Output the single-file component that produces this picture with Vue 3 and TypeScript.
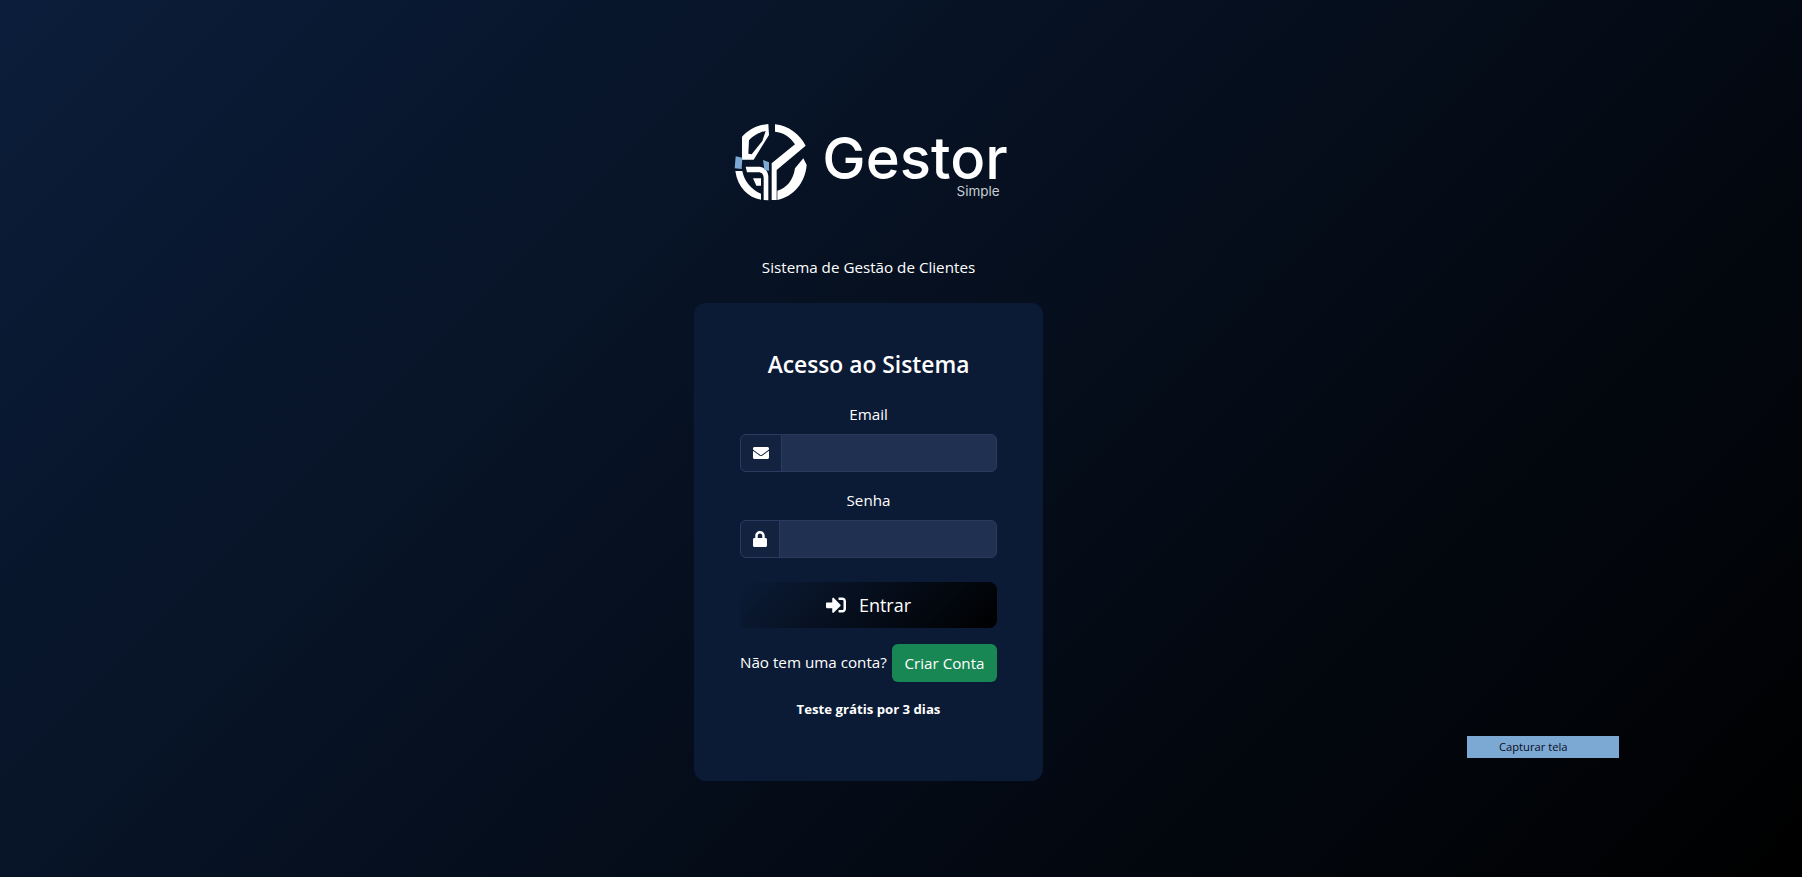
<template>
  <div class="page">
    <div class="brand">
      <svg class="brand-mark" viewBox="0 0 300 270" width="100" height="90" aria-hidden="true">
        <!-- leaf -->
        <path fill="#fff" fill-rule="evenodd" d="M51 65C70 45 95 30 130 27L132 60 86 134H51ZM72 76 70 116 80 118 112 78 122 48C105 51 84 62 72 76Z" />
        <!-- top arc, diagonal and bar -->
        <path fill="#fff" d="M150 28C190 32 225 58 242 92L155 165V255H140V145L210 88C195 65 175 52 150 50Z" />
        <!-- crescent -->
        <path fill="#fff" d="M157 227C185 220 205 195 210 160L235 130 245 150C240 205 205 245 157 255Z" />
        <!-- lower left -->
        <path fill="#fff" d="M31 168H52C58 198 78 224 108 236V254C70 248 38 218 31 168Z" />
        <path fill="#fff" d="M62 155H104C120 157 130 170 130 186V256L116 255V190C116 178 110 172 100 172H66Z" />
        <path fill="#fff" d="M84 190H108V212H94Z" />
        <!-- blue squares -->
        <path fill="#7ba9d3" d="M32 124 52 128 50 162 29 160Z" />
        <path fill="#7ba9d3" d="M114 135 132 142V168L118 164Z" />
      </svg>
      <div class="brand-text">
        <span class="brand-name">Gestor</span>
        <span class="brand-sub">Simple</span>
      </div>
    </div>

    <p class="subtitle">Sistema de Gestão de Clientes</p>

    <form class="card" @submit.prevent>
      <h2>Acesso ao Sistema</h2>

      <label class="field-label" for="email">Email</label>
      <div class="input-group">
        <span class="addon">
          <svg viewBox="0 0 512 512" width="16" height="16" fill="#fff" aria-hidden="true">
            <path d="M502.3 190.8c3.9-3.1 9.7-.2 9.7 4.7V400c0 26.5-21.5 48-48 48H48c-26.5 0-48-21.5-48-48V195.6c0-5 5.7-7.8 9.7-4.7 22.4 17.4 52.1 39.5 154.1 113.6 21.1 15.4 56.7 47.8 92.2 47.6 35.7.3 72-32.8 92.3-47.6 102-74.1 131.6-96.3 154-113.7zM256 320c23.2.4 56.6-29.2 73.4-41.4 132.7-96.3 142.8-104.7 173.4-128.7 5.8-4.5 9.2-11.5 9.2-18.9v-19c0-26.5-21.5-48-48-48H48C21.5 64 0 85.5 0 112v19c0 7.4 3.4 14.3 9.2 18.9 30.6 23.9 40.7 32.4 173.4 128.7 16.8 12.2 50.2 41.8 73.4 41.4z" />
          </svg>
        </span>
        <input id="email" v-model="email" type="email" />
      </div>

      <label class="field-label" for="senha">Senha</label>
      <div class="input-group">
        <span class="addon">
          <svg viewBox="0 0 448 512" width="14" height="16" fill="#fff" aria-hidden="true">
            <path d="M400 224h-24v-72C376 68.2 307.8 0 224 0S72 68.2 72 152v72H48c-26.5 0-48 21.5-48 48v192c0 26.5 21.5 48 48 48h352c26.5 0 48-21.5 48-48V272c0-26.5-21.5-48-48-48zm-104 0H152v-72c0-39.7 32.3-72 72-72s72 32.3 72 72v72z" />
          </svg>
        </span>
        <input id="senha" v-model="senha" type="password" />
      </div>

      <button class="btn-login" type="submit">
        <svg viewBox="0 0 512 512" width="20" height="20" fill="#fff" aria-hidden="true">
          <path d="M416 448h-84c-6.6 0-12-5.4-12-12v-40c0-6.6 5.4-12 12-12h84c17.7 0 32-14.3 32-32V160c0-17.7-14.3-32-32-32h-84c-6.6 0-12-5.4-12-12V76c0-6.6 5.4-12 12-12h84c53 0 96 43 96 96v192c0 53-43 96-96 96zm-47-201L201 79c-15-15-41-4.5-41 17v96H24c-13.3 0-24 10.7-24 24v96c0 13.3 10.7 24 24 24h136v96c0 21.5 26 32 41 17l168-168c9.3-9.4 9.3-24.6 0-34z" />
        </svg>
        <span>Entrar</span>
      </button>

      <div class="signup">
        <span class="signup-text">Não tem uma conta?</span>
        <a class="btn-signup" href="#">Criar Conta</a>
      </div>

      <p class="trial">Teste grátis por 3 dias</p>
    </form>

    <div class="capture">Capturar tela</div>
  </div>
</template>

<script setup lang="ts">
import { ref } from 'vue';

const email = ref<string>('');
const senha = ref<string>('');
</script>

<style scoped>
.page {
  position: relative;
  box-sizing: border-box;
  height: 877px;
  padding: 115px 65px 0 0;
  display: flex;
  flex-direction: column;
  align-items: center;
  overflow: hidden;
  background: linear-gradient(135deg, #0b1d3a 0%, #000 100%);
  color: #fff;
  font-family: "Open Sans", "Noto Sans", sans-serif;
}

.brand {
  display: flex;
  align-items: flex-start;
  height: 90px;
  margin-left: -4px;
}

.brand-mark {
  margin-right: -3px;
}

.brand-text {
  display: flex;
  flex-direction: column;
  align-items: flex-end;
  margin-top: 17px;
  font-family: Inter, sans-serif;
}

.brand-name {
  font-size: 58px;
  font-weight: 500;
  line-height: 52px;
}

.brand-sub {
  margin: 0 8px 0 0;
  font-size: 13.5px;
  line-height: 14px;
  color: #c9ced6;
}

.subtitle {
  margin: 50px 0 24px;
  font-size: 15.2px;
  line-height: 24px;
}

.card {
  box-sizing: border-box;
  width: 349px;
  padding: 44px 46px 62px;
  border-radius: 12px;
  background: #0b1b36;
  display: flex;
  flex-direction: column;
}

h2 {
  margin: 0 0 19px;
  font-size: 22.8px;
  font-weight: 600;
  line-height: 36px;
  text-align: center;
}

.field-label {
  margin-bottom: 8px;
  font-size: 15.2px;
  line-height: 24px;
  text-align: center;
}

.input-group {
  display: flex;
  height: 38px;
  margin-bottom: 16px;
}

.addon {
  display: flex;
  align-items: center;
  padding: 0 12px;
  background: #12223f;
  border: 1px solid #2a3b60;
  border-radius: 6px 0 0 6px;
}

input {
  flex: 1;
  min-width: 0;
  box-sizing: border-box;
  margin-left: -1px;
  padding: 6px 12px;
  background: #1f3050;
  border: 1px solid #2a3b60;
  border-radius: 0 6px 6px 0;
  color: #fff;
  outline: none;
}

.btn-login {
  display: flex;
  align-items: center;
  justify-content: center;
  gap: 13px;
  height: 46px;
  margin-top: 8px;
  border: none;
  border-radius: 8px;
  background: linear-gradient(135deg, #0b1b36 0%, #000 100%);
  color: #fff;
  font-family: inherit;
  font-size: 18px;
}

.signup {
  display: flex;
  align-items: center;
  justify-content: space-between;
  margin-top: 16px;
  font-size: 15.2px;
}

.signup-text {
  padding-bottom: 3px;
}

.btn-signup {
  display: flex;
  align-items: center;
  justify-content: center;
  width: 105px;
  height: 38px;
  border-radius: 6px;
  background: #198754;
  color: #fff;
  text-decoration: none;
}

.trial {
  margin: 17px 0 -1px;
  font-size: 13.2px;
  font-weight: 700;
  line-height: 21px;
  text-align: center;
}

.capture {
  position: absolute;
  left: 1467px;
  top: 736px;
  box-sizing: border-box;
  width: 152px;
  height: 22px;
  padding-left: 32px;
  background: #7ba9d3;
  color: #0b0b1a;
  font-size: 11.2px;
  line-height: 22px;
}
</style>

<style>
body {
  background: #000;
}
</style>
